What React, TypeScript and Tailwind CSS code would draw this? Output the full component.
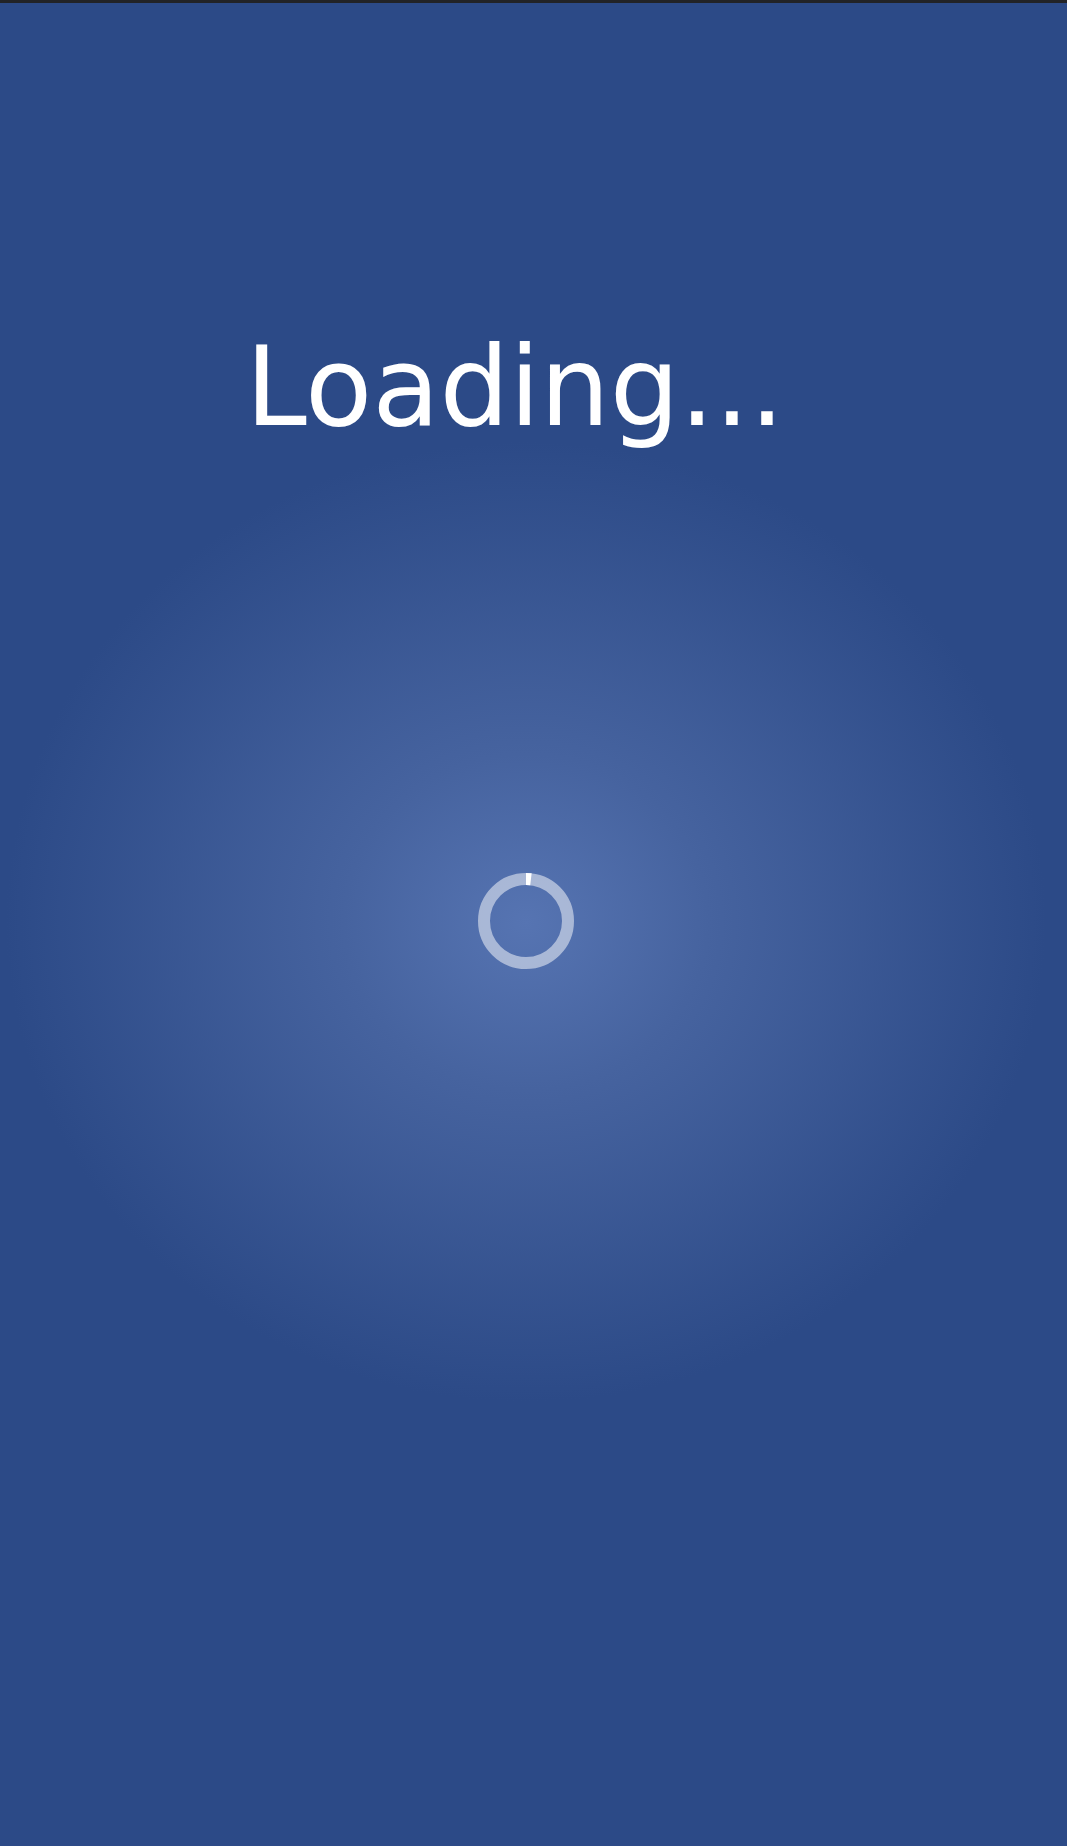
import React from 'react';

function Spinner() {
  // ring with a tiny progress arc starting at 12 o'clock
  const r = 42;
  const c = 2 * Math.PI * r;
  return (
    <svg width="96" height="96" viewBox="0 0 96 96" className="block">
      <circle cx="48" cy="48" r={r} fill="none" stroke="rgba(255,255,255,0.5)" strokeWidth="12" />
      <circle
        cx="48"
        cy="48"
        r={r}
        fill="none"
        stroke="#ffffff"
        strokeWidth="12"
        strokeDasharray={`5 ${c}`}
        transform="rotate(-90 48 48)"
      />
    </svg>
  );
}

export default function App() {
  return (
    <div className="flex min-h-[1846px] w-full flex-col bg-[#2c4a87] font-['DejaVu_Sans',sans-serif]">
      <div className="h-[3px] w-full bg-[#222326]" />
      <div className="flex flex-1 flex-col items-center bg-[radial-gradient(ellipse_520px_480px_at_526px_919px,#5674b2_0%,#46639f_35%,#2c4a87_100%)] pr-[15px] pt-[329px]">
        <h1 className="pr-[22px] text-[110px] font-normal leading-[110px] text-white">Loading...</h1>
        <div className="mt-[431px]">
          <Spinner />
        </div>
      </div>
    </div>
  );
}
